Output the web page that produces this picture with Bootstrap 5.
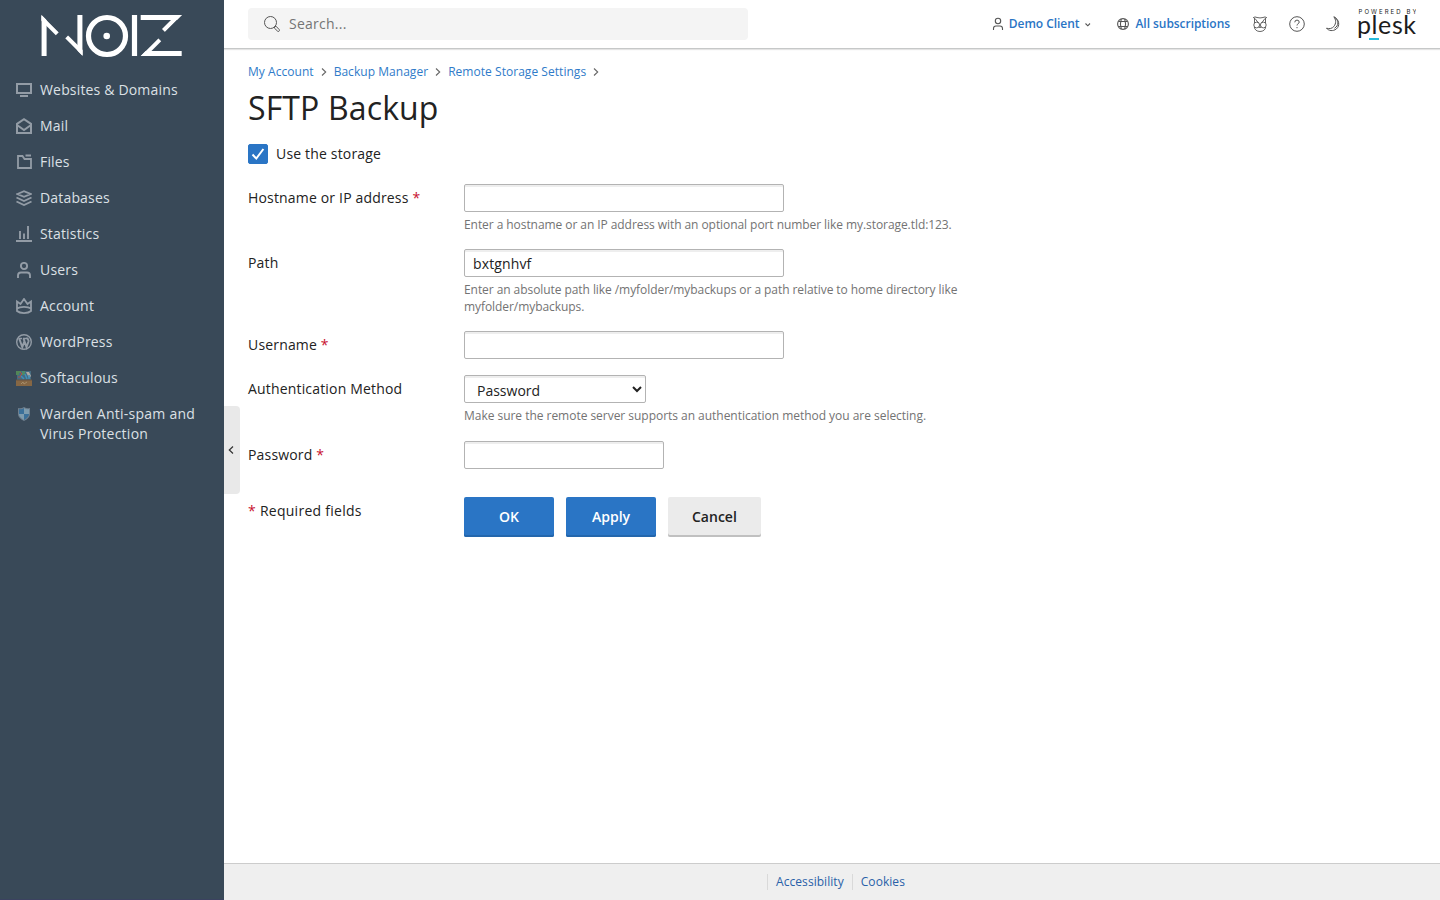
<!DOCTYPE html>
<html lang="en">
<head>
<meta charset="utf-8">
<meta name="viewport" content="width=device-width, initial-scale=1">
<title>SFTP Backup</title>
<link href="https://cdn.jsdelivr.net/npm/bootstrap@5.3.0/dist/css/bootstrap.min.css" rel="stylesheet">
<style>
body{font-family:"Open Sans","Noto Sans",sans-serif;font-size:14px;line-height:20px;color:#222;letter-spacing:.17px}
a{text-decoration:none}
svg{display:block;flex:none}
.side{width:224px;background:#394958;padding-top:72px;position:relative;border-bottom:1px solid #3b4260}
.brand{position:absolute;left:40px;top:12px}
.side .nav-link{padding:8px 16px;gap:8px;color:#dce0e5;line-height:20px}
.side .nav-link svg{margin-top:2px;color:#939ca6}
.topbar{height:49px;padding:0 24px;border-bottom:1px solid #c6c8c8;box-shadow:0 1px 1px #e4e4e4}
.search{width:500px;height:32px;background:#f4f4f4;border-radius:4px;padding-left:16px;gap:9px;color:#737373}
.search input{background:none;border:0;padding:0;width:400px;outline:0;letter-spacing:.25px}
.search input::placeholder{color:#757575;opacity:1}
.toplink{font-size:12px;font-weight:600;color:#2a75c5;letter-spacing:-.05px}
.topbar svg{color:#555;letter-spacing:0}
.crumbs{font-size:12px;line-height:16px;margin-top:15px;letter-spacing:.04px}
.crumbs a{color:#2f7bc9}
.crumbs svg{margin:0 7px 0 7px;color:#666}
h1{font-size:32px;line-height:40px;font-weight:400;margin:8px 0 16px;letter-spacing:.14px}
.form-check-input.use{width:20px;height:20px;margin:0;border-radius:2px;border-color:#2a75c5;background-color:#2a75c5;background-image:url("data:image/svg+xml,%3Csvg xmlns='http://www.w3.org/2000/svg' viewBox='0 0 18 18'%3E%3Cpath d='M3.5 9.5l3.8 4L14.4 4' fill='none' stroke='white' stroke-width='2'/%3E%3C/svg%3E")!important}
.frow{gap:16px;margin-bottom:16px}
.flabel{width:200px;padding-top:4px;flex:none}
.req{color:#c8102e}
.fld{display:block;height:28px;width:320px;border:1px solid #b3b3b3;border-radius:2px;background:#fff;box-shadow:inset 0 2px 0 #eee;padding:2px 8px;color:#222;letter-spacing:.12px}
select.fld{padding:3px 8px 1px;letter-spacing:0}
.hint{font-size:12px;line-height:17px;color:#737373;margin-top:4px;max-width:504px;letter-spacing:-.067px}
.hint-auth{letter-spacing:-.03px}
.act{min-width:90px;height:40px;border:0;border-radius:2px;padding:0 24px 2px;font-size:14px;font-weight:600;letter-spacing:0}
.act-p,.act-p:hover{background:#2a75c5;color:#fff;box-shadow:inset 0 -2px 0 #2366ac}
.act-s,.act-s:hover{background:#ebebeb;color:#222;box-shadow:inset 0 -2px 0 #c0c0c0}
.foot{height:37px;background:#efefef;border-top:1px solid #ccc;font-size:12px;padding-left:16px;letter-spacing:.05px}
.foot a{border-left:1px solid #d9d9d9;padding:0 8px;line-height:16px;color:#2961a8}
.handle{position:absolute;left:224px;top:406px;width:16px;height:88px;background:#e9e9e9;border-radius:0 4px 4px 0;color:#333}
</style>
</head>
<body>
<div class="d-flex vh-100 position-relative overflow-hidden">
<aside class="side flex-shrink-0">
<a href="#" class="brand" aria-label="NOIZ">
<svg width="144" height="48" viewBox="0 0 144 48" fill="none" stroke="#fff" stroke-width="5.200">
<clipPath id="c1"><path d="M1.300 2.800L22 23.500V44H1.300z"/></clipPath>
<clipPath id="c2"><path d="M22 3h20.700v41L22 23.300z"/></clipPath>
<clipPath id="c3"><path d="M100.700 3H142L119 26h-18.300z"/></clipPath>
<clipPath id="c4"><path d="M100.700 44L119 25.700h22.700V44z"/></clipPath>
<g clip-path="url(#c1)"><path d="M4 0v48"/><path d="M0 4.500l17.300 17.300" stroke-width="4.200"/></g>
<g clip-path="url(#c2)"><path d="M40 0v48"/><path d="M26.600 24.900L44 42.300" stroke-width="4.200"/></g>
<circle cx="67" cy="24" r="18.500"/><circle cx="66.700" cy="24" r="3.300" fill="#fff" stroke="none"/>
<path d="M94.500 3v41"/>
<g clip-path="url(#c3)"><path d="M100 5.500h44"/><path d="M143-1l-19.500 19.500" stroke-width="4.200"/></g>
<g clip-path="url(#c4)"><path d="M100 41.500h44"/><path d="M101 46.500l18.700-18.700" stroke-width="4.200"/></g>
</svg></a>
<nav class="nav flex-column flex-nowrap">
<a class="nav-link d-flex" href="#"><svg width="16" height="16" fill="none" stroke="currentColor" stroke-width="2"><path d="M1 2h14v9H1zM4 14h8"/></svg>Websites &amp; Domains</a>
<a class="nav-link d-flex" href="#"><svg width="16" height="16" fill="none" stroke="currentColor" stroke-width="2"><path d="M1 5.800L8 1.200l7 4.600V15H1zM1 7l7 5 7-5"/></svg>Mail</a>
<a class="nav-link d-flex" href="#"><svg width="16" height="16" fill="none" stroke="currentColor" stroke-width="1.800"><path d="M2 2h4.500l2 3H15v9H2zM9.500 1.500H15"/></svg>Files</a>
<a class="nav-link d-flex" href="#"><svg width="16" height="16" fill="none" stroke="currentColor" stroke-width="1.900"><path d="M1.500 4L8 1.200 14.500 4 8 6.800zM.5 7.500L8 11l7.500-3.500M.5 11.500L8 15l7.500-3.500"/></svg>Databases</a>
<a class="nav-link d-flex" href="#"><svg width="16" height="16" fill="none" stroke="currentColor" stroke-width="1.900"><path d="M0 15h16M4 5v8M8 7.500V13M12 0v13"/></svg>Statistics</a>
<a class="nav-link d-flex" href="#"><svg width="16" height="16" fill="none" stroke="currentColor" stroke-width="1.900"><circle cx="8" cy="4" r="3.100"/><path d="M2 16v-2.500q0-3 3-3h6q3 0 3 3V16"/></svg>Users</a>
<a class="nav-link d-flex" href="#"><svg width="16" height="16" fill="none" stroke="currentColor" stroke-width="1.800"><path d="M1 13V3.500L4.500 6 8 1l3.500 5L15 3.500V13c-3 2.700-11 2.700-14 0zM1 10.500c3-2.300 11-2.300 14 0"/></svg>Account</a>
<a class="nav-link d-flex" href="#"><svg width="16" height="16" fill="none" stroke="currentColor"><circle cx="8" cy="8" r="7.300" stroke-width="1.400"/><path d="M2.500 4.500h3.500M7 4.500h4" stroke-width="1.300"/><path d="M3.200 4.500L6.300 13 8.500 7M7.500 4.500L10.500 13l2-5.500c.6-1.800-1.500-2.200-1-4" stroke-width="2"/></svg>WordPress</a>
<a class="nav-link d-flex" href="#"><svg width="16" height="16"><path d="M1 1h14v9H1z" fill="#456b80"/><path d="M0 1h5v2H3v2H0z" fill="#518657"/><path d="M4 2l2 2-2 2M2 7h3" stroke="#b24f42" fill="none"/><path d="M6 1h3v4H6z" fill="#4c8a68"/><path d="M10 2h3l2 4-2 2z" fill="#b1a9a3"/><path d="M5 6l3 3M9 4l2 5M13 5v4" stroke="#3f8fb8" stroke-width="1.500"/><path d="M0 10h16v6H0z" fill="#866744"/><path d="M0 10h16" stroke="#665342"/><path d="M5 14l2-2 1 2 3-2" stroke="#a58d6b" fill="none"/></svg>Softaculous</a>
<a class="nav-link d-flex" href="#"><svg width="16" height="16"><path d="M2 2q3 1 6-1 3 2 6 1v6q0 4-6 7-6-3-6-7z" fill="#6f7f8d"/><path d="M3 3q3 1 5-1v6H3zM8 8h5q0 3-5 6z" fill="#3b7099"/><path d="M8 2q2 2 5 1v5H8zM3 8h5v6Q3 11 3 8z" fill="#7e9cae"/></svg><span style="letter-spacing:.25px">Warden Anti-spam and Virus Protection</span></a>
</nav>
</aside>
<div class="flex-grow-1 d-flex flex-column">
<header class="topbar d-flex align-items-center">
<div class="search d-flex align-items-center"><svg width="16" height="16" fill="none" stroke="currentColor"><circle cx="6.500" cy="6.500" r="6"/><path d="M10.700 10.700l1.300-.5 3.300 3.500q.5 1-.4 1.600-.8.500-1.400-.2L10.300 12z"/></svg><input type="text" placeholder="Search..." aria-label="Search"></div>
<div class="ms-auto d-flex align-items-center">
<a class="toplink d-flex align-items-center" href="#"><svg class="me-1" width="14" height="14" fill="none" stroke="currentColor" stroke-width="1.100"><circle cx="7" cy="4" r="2.700"/><path d="M2.500 13v-1.500q0-2.500 2.500-2.500h4q2.500 0 2.500 2.500V13"/></svg>Demo Client<svg class="ms-1" width="9" height="9" fill="none" stroke="currentColor" stroke-width="1.100"><path d="M2.500 3.500l2.300 2.300L7 3.500"/></svg></a>
<a class="toplink d-flex align-items-center" style="margin-left:25px" href="#"><svg width="12" height="12" style="margin-right:6px" fill="none" stroke="currentColor" stroke-width="1.100"><circle cx="6" cy="6" r="5.400"/><path d="M1.500 3.500h9M1.500 8.500h9M4.300 1Q2.500 6 4.300 11M7.700 1Q9.500 6 7.700 11"/></svg>All subscriptions</a>
<svg style="margin-left:22px" width="16" height="16" fill="none" stroke="currentColor" stroke-width=".9"><path d="M1 1.800Q3 .2 5 1.500q3 .9 6 0Q13 .2 15 1.800M2.500 2v5M13.500 2v5M3 2.500L6.500 7M13 2.500L9.500 7M2.300 11q.7 4.300 5.700 4.500 5-.2 5.700-4.500M7 10.500l1 1.500 1-1.500"/><circle cx="4.700" cy="9" r="2.900"/><circle cx="11.300" cy="9" r="2.900"/></svg>
<svg style="margin-left:20.500px" width="16" height="16" fill="none" stroke="currentColor"><circle cx="8" cy="8" r="7.300"/><path d="M5.800 6.300q0-2.200 2.200-2.200t2.200 2q0 1-1.200 1.700-1 .6-1 1.700M8 11v1.200"/></svg>
<svg style="margin-left:20px" width="16" height="16" fill="none" stroke="currentColor"><path d="M8.800.8c5.500 2.500 6.500 9 2.500 12.200-3.200 2.500-7.600 1.900-9.800-.8 3 .9 5.700.3 7.300-1.700C11.500 7.300 11 3.500 8.800.8zM9.500 1c4.500 3.500 4.500 8.500 0 11.300"/></svg>
<svg style="margin-left:17.500px" width="58" height="34" viewBox="0 0 58 34"><text x="0.500" y="6.800" font-family="Inter,sans-serif" font-size="6" textLength="58" fill="#222">POWERED BY</text><text x="-1" y="27" font-family="Lato,sans-serif" font-size="25" textLength="59" fill="#1c1c1c">plesk</text><path d="M11 32h10" stroke="#28bcdd" stroke-width="2"/></svg>
</div>
</header>
<main class="flex-grow-1 px-4">
<nav class="crumbs d-flex align-items-center" aria-label="breadcrumb"><a href="#">My Account</a><svg width="6" height="10" fill="none" stroke="currentColor" stroke-width="1.100"><path d="M1 1.500L4.700 5 1 8.500"/></svg><a href="#">Backup Manager</a><svg width="6" height="10" fill="none" stroke="currentColor" stroke-width="1.100"><path d="M1 1.500L4.700 5 1 8.500"/></svg><a href="#">Remote Storage Settings</a><svg width="6" height="10" fill="none" stroke="currentColor" stroke-width="1.100"><path d="M1 1.500L4.700 5 1 8.500"/></svg></nav>
<h1>SFTP Backup</h1>
<form>
<label class="d-flex gap-2 mb-0" style="margin-bottom:20px!important"><input class="form-check-input use" type="checkbox" checked>Use the storage</label>
<div class="frow d-flex"><label class="flabel" for="h">Hostname or IP address <span class="req">*</span></label><div><input id="h" class="fld"><div class="hint">Enter a hostname or an IP address with an optional port number like my.storage.tld:123.</div></div></div>
<div class="frow d-flex"><label class="flabel" for="p">Path</label><div><input id="p" class="fld" value="bxtgnhvf"><div class="hint">Enter an absolute path like /myfolder/mybackups or a path relative to home directory like myfolder/mybackups.</div></div></div>
<div class="frow d-flex"><label class="flabel" for="u">Username <span class="req">*</span></label><input id="u" class="fld"></div>
<div class="frow d-flex" style="margin-bottom:17px"><label class="flabel" for="a">Authentication Method</label><div><select id="a" class="fld" style="width:182px"><option>Password</option><option>Key</option></select><div class="hint hint-auth">Make sure the remote server supports an authentication method you are selecting.</div></div></div>
<div class="frow d-flex"><label class="flabel" for="w">Password <span class="req">*</span></label><input id="w" type="password" class="fld" style="width:200px"></div>
<div class="frow d-flex" style="margin-top:28px"><div class="flabel" style="letter-spacing:.27px"><span class="req">*</span> Required fields</div><div class="d-flex" style="gap:12px"><button type="button" class="btn act act-p">OK</button><button type="button" class="btn act act-p">Apply</button><button type="button" class="btn act act-s">Cancel</button></div></div>
</form>
</main>
<footer class="foot d-flex align-items-center justify-content-center"><a href="#">Accessibility</a><a href="#">Cookies</a></footer>
</div>
<div class="handle d-flex align-items-center"><svg class="ms-1" width="6" height="10" fill="none" stroke="currentColor" stroke-width="1.200"><path d="M5 1.500L1.300 5 5 8.500"/></svg></div>
</div>
<script src="https://cdn.jsdelivr.net/npm/bootstrap@5.3.0/dist/js/bootstrap.bundle.min.js"></script>
</body>
</html>
